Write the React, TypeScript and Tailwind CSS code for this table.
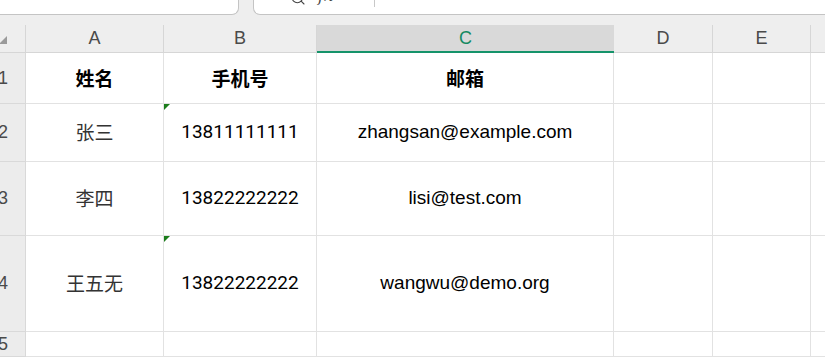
import { Search } from "lucide-react";

const COLS = [
  { key: "A", w: "w-[138px]" },
  { key: "B", w: "w-[153px]" },
  { key: "C", w: "w-[297px]" },
  { key: "D", w: "w-[99px]" },
  { key: "E", w: "w-[98px]" },
];

type Row = { n: number; h: string; cells: string[]; mark?: boolean; head?: boolean };

const ROWS: Row[] = [
  { n: 1, h: "h-[51px]", cells: ["姓名", "手机号", "邮箱", "", ""], head: true },
  { n: 2, h: "h-[58px]", cells: ["张三", "13811111111", "zhangsan@example.com", "", ""], mark: true },
  { n: 3, h: "h-[74px]", cells: ["李四", "13822222222", "lisi@test.com", "", ""] },
  { n: 4, h: "h-[96px]", cells: ["王五无", "13822222222", "wangwu@demo.org", "", ""], mark: true },
  { n: 5, h: "h-[25px]", cells: ["", "", "", "", ""] },
];

function GreenMark() {
  return (
    <svg width="6" height="6" viewBox="0 0 6 6" className="absolute left-0 top-0">
      <path d="M0 0H6L0 6Z" fill="#1b7d1b" />
    </svg>
  );
}

export default function App() {
  return (
    <div className="w-[825px] h-[357px] overflow-hidden bg-[#eeeeee] font-['Liberation_Sans',Arial,sans-serif]">
      {/* name box + formula bar, mostly scrolled out of view */}
      <div className="flex h-[15px]">
        <div className="w-[239px] h-full bg-white border-b border-r border-[#c4c4c4] rounded-br-[7px] overflow-hidden flex justify-center">
          <span className="-mt-[14px] text-[16px] text-[#333] leading-[18px] pr-[10px]">C1</span>
        </div>
        <div className="w-[14px]" />
        <div className="flex-1 h-full bg-white border-b border-l border-[#c4c4c4] rounded-bl-[7px] overflow-hidden flex items-start">
          <Search size={16} strokeWidth={1.6} className="ml-[36px] -mt-[10px] text-[#444]" />
          <span className="ml-[12px] -mt-[13px] italic text-[16px] leading-[18px] text-[#444] font-['DejaVu_Serif',serif]">fx</span>
          <div className="ml-[41px] w-px h-[7px] bg-[#c8c8c8]" />
        </div>
      </div>
      <div className="h-[10px]" />

      {/* column headers */}
      <div className="flex h-[28px]">
        <div className="w-[26px] h-full border-r border-b border-[#d6d6d6] relative overflow-hidden">
          <svg width="8" height="8" viewBox="0 0 8 8" className="absolute -left-[1px] top-[11px]">
            <path d="M8 0V8H0Z" fill="#9a9a9a" />
          </svg>
        </div>
        {COLS.map((c) =>
          c.key === "C" ? (
            <div
              key={c.key}
              className={`${c.w} h-full bg-[#d9d9d9] border-b-2 border-[#15936a] flex items-center justify-center text-[18px] text-[#148a61]`}
            >
              {c.key}
            </div>
          ) : (
            <div
              key={c.key}
              className={`${c.w} h-full border-r border-b border-[#d6d6d6] flex items-center justify-center text-[18px] text-[#4a4a4a]`}
            >
              {c.key}
            </div>
          )
        )}
        <div className="flex-1 h-full border-b border-[#d6d6d6]" />
      </div>

      {/* rows */}
      {ROWS.map((r) => (
        <div key={r.n} className={`flex ${r.h}`}>
          <div className="w-[26px] h-full bg-[#ececec] border-r border-b border-[#d9d9d9] flex items-center overflow-hidden">
            <span className="-ml-[2px] text-[18px] text-[#4a4a4a]">{r.n}</span>
          </div>
          {COLS.map((c, i) => (
            <div
              key={c.key}
              className={`${c.w} h-full bg-white border-r border-b border-[#e2e2e2] relative flex items-center justify-center`}
            >
              {i === 1 && r.mark && <GreenMark />}
              {i === 0 ? (
                <span
                  className={`text-[19px] font-['Noto_Sans_CJK_SC',sans-serif] ${
                    r.head ? "font-bold text-black" : "text-[#333]"
                  }`}
                >
                  {r.cells[i]}
                </span>
              ) : r.head ? (
                <span className="text-[19px] font-bold text-black font-['Noto_Sans_CJK_SC',sans-serif]">
                  {r.cells[i]}
                </span>
              ) : i === 1 ? (
                <span className="text-[19px] text-black font-['Roboto',sans-serif]">{r.cells[i]}</span>
              ) : (
                <span className="text-[19px] text-black">{r.cells[i]}</span>
              )}
            </div>
          ))}
          <div className="flex-1 h-full bg-white border-b border-[#e2e2e2]" />
        </div>
      ))}
    </div>
  );
}
